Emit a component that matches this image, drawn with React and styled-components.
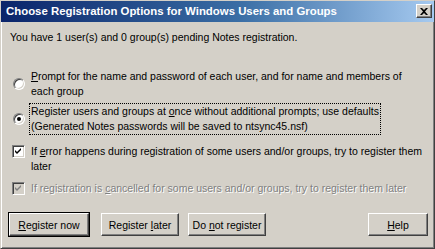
import React from "react";
import styled, { createGlobalStyle, css } from "styled-components";

const Global = createGlobalStyle`
  html, body { margin: 0; padding: 0; background: #d4d0c8; }
  body { font-family: "Liberation Sans", Arial, sans-serif; font-size: 10.5px; }
`;

const Window = styled.div`
  width: 435px;
  height: 249px;
  box-sizing: border-box;
  background: #d4d0c8;
  border: 1px solid #404040;
  border-top-color: #d4d0c8;
  border-left-color: #d4d0c8;
  box-shadow: inset 1px 1px 0 #ffffff, inset -1px -1px 0 #808080;
  padding: 0 2px 2px 2px;
  display: flex;
  flex-direction: column;
  overflow: hidden;
`;

const TitleBar = styled.div`
  flex: none;
  height: 22px;
  margin: -1px -3px 0 -3px;
  padding: 0 3px 0 6px;
  display: flex;
  align-items: center;
  justify-content: space-between;
  background: linear-gradient(to right, #0a246a 0%, #3a6ea5 55%, #a6caf0 100%);
  color: #ffffff;
  font-family: "Liberation Sans", Arial, sans-serif;
  font-weight: bold;
  font-size: 11.4px;
  white-space: nowrap;
`;

const CloseButton = styled.div`
  width: 16px;
  height: 14px;
  box-sizing: border-box;
  background: #d4d0c8;
  border: 1px solid;
  border-color: #ffffff #404040 #404040 #ffffff;
  box-shadow: inset -1px -1px 0 #808080;
  display: flex;
  align-items: center;
  justify-content: center;
`;

const Content = styled.div`
  flex: 1;
  display: flex;
  flex-direction: column;
  padding: 8px 4px 0 7px;
  color: #000000;
`;

const Intro = styled.div`
  line-height: 15px;
  white-space: nowrap;
  margin-bottom: 24px;
`;

const Option = styled.div`
  display: flex;
  align-items: center;
  gap: 4px;
  margin-bottom: ${(p) => p.$gap}px;
  color: ${(p) => (p.$disabled ? "#808080" : "#000000")};
  text-shadow: ${(p) => (p.$disabled ? "1px 1px 0 #ffffff" : "none")};
`;

const Label = styled.div`
  line-height: 15px;
  padding: 0 1px;
  white-space: nowrap;
  ${(p) =>
    p.$focused &&
    css`
      outline: 1px dotted #000000;
      outline-offset: 0;
    `}
`;

const Radio = styled.span`
  flex: none;
  width: 12px;
  height: 12px;
  box-sizing: border-box;
  border-radius: 50%;
  background: #ffffff;
  border: 1px solid;
  border-color: #808080 #ffffff #ffffff #808080;
  box-shadow: inset 1px 1px 0 #404040, inset -1px -1px 0 #d4d0c8;
  display: flex;
  align-items: center;
  justify-content: center;
  margin-left: 3px;
  margin-right: 1px;
  &::after {
    content: "";
    width: 4px;
    height: 4px;
    border-radius: 50%;
    background: ${(p) => (p.$checked ? "#000000" : "transparent")};
  }
`;

const Check = styled.span`
  flex: none;
  width: 13px;
  height: 13px;
  box-sizing: border-box;
  background: ${(p) => (p.$disabled ? "#d4d0c8" : "#ffffff")};
  border: 1px solid;
  border-color: #808080 #ffffff #ffffff #808080;
  box-shadow: inset 1px 1px 0 #404040, inset -1px -1px 0 #d4d0c8;
  display: flex;
  align-items: center;
  justify-content: center;
  margin-left: 2px;
  margin-right: 1px;
  align-self: ${(p) => (p.$top ? "flex-start" : "center")};
  margin-top: ${(p) => (p.$top ? 1 : 0)}px;
`;

const Buttons = styled.div`
  display: flex;
  align-items: center;
  margin-top: auto;
  margin-bottom: 10px;
  margin-left: -1px;
  white-space: nowrap;
`;

const Button = styled.div`
  height: 23px;
  box-sizing: border-box;
  width: ${(p) => p.$w}px;
  margin-right: ${(p) => p.$mr || 0}px;
  margin-left: ${(p) => (p.$push ? "auto" : "0")};
  display: flex;
  align-items: center;
  justify-content: center;
  background: #d4d0c8;
  border: 1px solid;
  border-color: #ffffff #404040 #404040 #ffffff;
  box-shadow: inset -1px -1px 0 #808080;
  ${(p) =>
    p.$default &&
    css`
      outline: 1px solid #000000;
    `}
`;

const U = styled.span`
  text-decoration: underline;
`;

const CheckMark = ({ color }) => (
  <svg width="7" height="7" viewBox="0 0 7 7">
    <path d="M0 2 L2 4 L6 0 L6 2 L2 6 L0 4 Z" fill={color} />
  </svg>
);

export default function App() {
  return (
    <>
      <Global />
      <Window>
        <TitleBar>
          <span>Choose Registration Options for Windows Users and Groups</span>
          <CloseButton>
            <svg width="8" height="7" viewBox="0 0 8 7">
              <path d="M0 0h2l2 2 2-2h2L5 3.5 8 7H6L4 5 2 7H0l3-3.5z" fill="#000" />
            </svg>
          </CloseButton>
        </TitleBar>
        <Content>
          <Intro>You have 1 user(s) and 0 group(s) pending Notes registration.</Intro>
          <Option $gap={5}>
            <Radio />
            <Label>
              <U>P</U>rompt for the name and password of each user, and for name and members of
              <br />
              each group
            </Label>
          </Option>
          <Option $gap={10}>
            <Radio $checked />
            <Label $focused>
              Register users and groups at <U>o</U>nce without additional prompts; use defaults
              <br />
              (Generated Notes passwords will be saved to ntsync45.nsf)
            </Label>
          </Option>
          <Option $gap={7}>
            <Check $top>
              <CheckMark color="#000000" />
            </Check>
            <Label>
              If <U>e</U>rror happens during registration of some users and/or groups, try to register them
              <br />
              later
            </Label>
          </Option>
          <Option $gap={0} $disabled>
            <Check $disabled>
              <CheckMark color="#808080" />
            </Check>
            <Label>
              If registration is <U>c</U>ancelled for some users and/or groups, try to register them later
            </Label>
          </Option>
          <Buttons>
            <Button $w={80} $mr={12} $default>
              <span>
                <U>R</U>egister now
              </span>
            </Button>
            <Button $w={78} $mr={9}>
              <span>
                Register <U>l</U>ater
              </span>
            </Button>
            <Button $w={78}>
              <span>
                Do <U>n</U>ot register
              </span>
            </Button>
            <Button $w={60} $push>
              <span>
                <U>H</U>elp
              </span>
            </Button>
          </Buttons>
        </Content>
      </Window>
    </>
  );
}
